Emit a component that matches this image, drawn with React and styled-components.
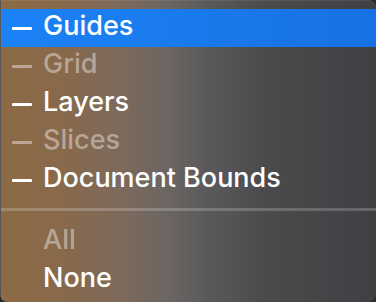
import React from 'react'
import styled, { createGlobalStyle } from 'styled-components'

const GlobalStyle = createGlobalStyle`
  html, body {
    margin: 0;
    padding: 0;
    background: #2a2a2c;
  }
  body {
    font-family: "Inter", "Noto Sans", "Liberation Sans", sans-serif;
  }
`

const Menu = styled.div`
  width: 376px;
  height: 302px;
  box-sizing: border-box;
  padding-top: 8px;
  border-radius: 0 8px 8px 8px;
  border-left: 1px solid rgba(255, 255, 255, 0.12);
  border-top: 1px solid rgba(255, 255, 255, 0.08);
  overflow: hidden;
  background: linear-gradient(
    90deg,
    #8c6a45 0%,
    #88694b 16%,
    #7d6a5c 32%,
    #6a6562 45%,
    #59585a 56%,
    #4b4b4d 70%,
    #3f4043 100%
  );
  display: flex;
  flex-direction: column;
`

const Item = styled.div`
  height: 38px;
  display: grid;
  grid-template-columns: 42px 1fr;
  align-items: center;
  font-size: 27px;
  font-weight: 500;
  color: ${({ disabled }) => (disabled ? 'rgba(255, 255, 255, 0.42)' : '#ffffff')};
  background: ${({ active }) => (active ? 'linear-gradient(90deg, #1c82f7, #1672e2)' : 'transparent')};
`

const Dash = styled.span`
  justify-self: start;
  margin-left: 11px;
  width: 20px;
  height: 3px;
  border-radius: 1px;
  background: currentColor;
`

const Label = styled.span`
  line-height: 34px;
  padding-bottom: 4px;
`

const Separator = styled.div`
  height: 24px;
  display: flex;
  align-items: center;
  padding-bottom: 3px;
  box-sizing: border-box;

  &::after {
    content: '';
    flex: 1;
    height: 3px;
    background: rgba(255, 255, 255, 0.2);
  }
`

const layers = [
  { label: 'Guides', active: true },
  { label: 'Grid', disabled: true },
  { label: 'Layers' },
  { label: 'Slices', disabled: true },
  { label: 'Document Bounds' },
]

export default function App() {
  return (
    <>
      <GlobalStyle />
      <Menu>
        {layers.map((l) => (
          <Item key={l.label} active={l.active} disabled={l.disabled}>
            <Dash />
            <Label>{l.label}</Label>
          </Item>
        ))}
        <Separator />
        <Item disabled>
          <span />
          <Label>All</Label>
        </Item>
        <Item>
          <span />
          <Label>None</Label>
        </Item>
      </Menu>
    </>
  )
}
